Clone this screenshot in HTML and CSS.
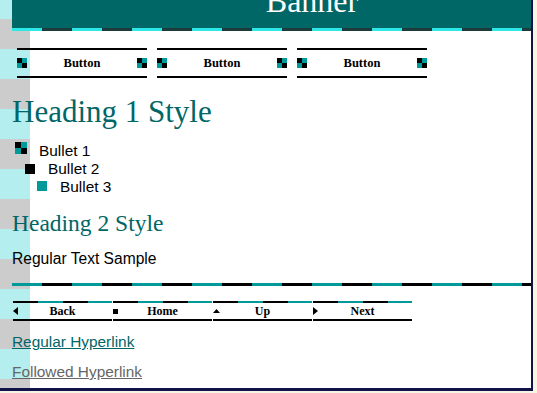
FILE: index.html
```html
<!DOCTYPE html>
<html>
<head>
	<meta charset="UTF-8">
	<title>Theme Preview</title>
	<link rel="stylesheet" href="styles.css">
</head>
<body>
	<div class="frame">
		<div class="banner"><span class="banner-text">Banner</span></div>
		<div class="banner-rule"></div>

		<div class="buttons">
			<div class="btn"><i class="chk"></i><span>Button</span><i class="chk"></i></div>
			<div class="btn"><i class="chk"></i><span>Button</span><i class="chk"></i></div>
			<div class="btn"><i class="chk"></i><span>Button</span><i class="chk"></i></div>
		</div>

		<h1>Heading 1 Style</h1>
		<ul class="bullets">
			<li class="lv1"><i class="chk chk-big"></i><span>Bullet 1</span></li>
			<li class="lv2"><i class="sq"></i><span>Bullet 2</span></li>
			<li class="lv3"><i class="sq sq-teal"></i><span>Bullet 3</span></li>
		</ul>

		<h2>Heading 2 Style</h2>
		<p class="text">Regular Text Sample</p>

		<div class="rule"></div>

		<div class="nav">
			<div class="nav-btn">
				<svg width="5" height="8" viewBox="0 0 5 8"><polygon points="5,0 5,8 0,4"/></svg>
				<span>Back</span>
			</div>
			<div class="nav-btn">
				<svg width="5" height="5" viewBox="0 0 5 5"><rect width="5" height="5"/></svg>
				<span>Home</span>
			</div>
			<div class="nav-btn">
				<svg width="7" height="4" viewBox="0 0 7 4"><polygon points="0,4 7,4 3.5,0"/></svg>
				<span>Up</span>
			</div>
			<div class="nav-btn">
				<svg width="5" height="8" viewBox="0 0 5 8"><polygon points="0,0 5,4 0,8"/></svg>
				<span>Next</span>
			</div>
		</div>

		<p class="text link-row"><a href="#" class="link">Regular Hyperlink</a></p>
		<p class="text link-row"><a href="#" class="link followed">Followed Hyperlink</a></p>
	</div>
</body>
</html>
```
FILE: styles.css
```css
body{
	margin: 0;
	background: #f6f6e4;
	font-family: "Liberation Sans", Arial, sans-serif;
	overflow: hidden;
}
.frame{
	width: 519px;
	height: 388px;
	padding-left: 12px;
	border-right: 2px solid #12124a;
	border-bottom: 3px solid #12124a;
	background: #fff linear-gradient(#b4eeee 50%, #cccccc 50%) 0 -11px / 30px 60px repeat-y;
	overflow: hidden;
}
/* banner */
.banner{
	width: 600px;
	height: 28px;
	background: #006666;
	color: #fff;
	text-align: center;
	font: 32px/36px "Liberation Serif", serif;
	overflow: hidden;
}
.banner-text{
	display: block;
	margin-top: -17px;
}
.banner-rule{
	width: 600px;
	height: 3px;
	background: repeating-linear-gradient(90deg, #2ee8e8 0 30px, #1d3b3b 30px 60px);
}
/* top buttons */
.buttons{
	display: flex;
	gap: 10px;
	margin: 17px 0 0 5px;
}
.btn{
	width: 130px;
	height: 26px;
	border-top: 2px solid #000;
	border-bottom: 2px solid #000;
	display: flex;
	align-items: center;
	justify-content: space-between;
	font: bold 12.5px "Liberation Serif", serif;
}
.chk{
	display: block;
	width: 10px;
	height: 10px;
	background: conic-gradient(#009999 0 25%, #000 0 50%, #009999 0 75%, #000 0);
}
.chk-big{
	width: 12px;
	height: 12px;
}
/* headings and text */
h1{
	margin: 15px 0 0;
	font: normal 31px/37px "Liberation Serif", serif;
	color: #006666;
}
h2{
	margin: 14px 0 0;
	font: normal 23.5px/27px "Liberation Serif", serif;
	color: #006666;
}
.bullets{
	list-style: none;
	margin: 12px 0 0;
	padding: 0;
	font-size: 15.4px;
	line-height: 18px;
}
.bullets li{
	display: flex;
	align-items: flex-start;
}
.lv1{
	padding-left: 3px;
	gap: 12px;
}
.lv2{
	padding-left: 13px;
	gap: 13px;
}
.lv3{
	padding-left: 25px;
	gap: 13px;
}
.sq{
	display: block;
	width: 10px;
	height: 10px;
	margin-top: 4px;
	background: #000;
}
.sq-teal{
	margin-top: 3px;
	background: #009999;
}
.text{
	margin: 13px 0 0;
	font-size: 15.6px;
	line-height: 18px;
}
.rule{
	width: 600px;
	height: 3px;
	margin-top: 15px;
	background: repeating-linear-gradient(90deg, #009999 0 30px, #000 30px 60px);
}
/* nav bar */
.nav{
	display: flex;
	gap: 1px;
	margin: 15px 0 0 1px;
}
.nav-btn{
	width: 99px;
	height: 16px;
	padding-top: 2px;
	border-bottom: 2px solid #000;
	background: linear-gradient(90deg, #000 0 25px, #009999 25px 50px, #000 50px 75px, #009999 75px) top left / 100% 2px no-repeat;
	display: grid;
	grid-template-columns: 8px 1fr 8px;
	align-items: center;
	font: bold 12px "Liberation Serif", serif;
}
.nav-btn svg{
	display: block;
	justify-self: start;
}
.nav-btn span{
	text-align: center;
}
/* links */
.link-row{
	margin-top: 12px;
	font-size: 15.4px;
}
.link{
	color: #006666;
}
.link.followed{
	color: #666666;
}
```
